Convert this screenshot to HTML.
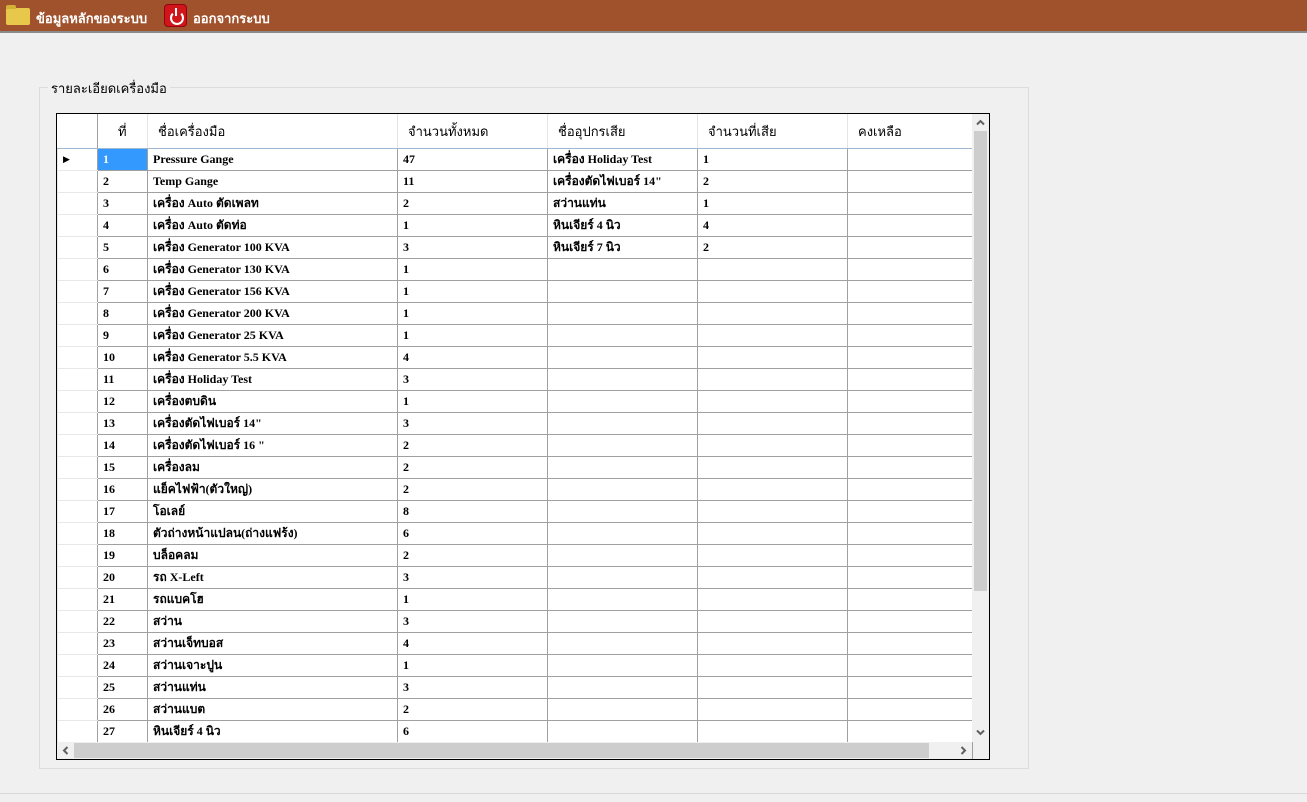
<!DOCTYPE html>
<html><head><meta charset="utf-8"><style>
*{margin:0;padding:0;box-sizing:border-box}
body{width:1307px;height:802px;background:#f0f0f0;position:relative;overflow:hidden;font-family:"Liberation Serif","DejaVu Sans",serif}
.top{position:absolute;left:0;top:0;width:1307px;height:33px;background:#a0522d;border-bottom:2px solid #8a8a8a}
.top span{position:absolute;top:8px;color:#fff;font:bold 13px "Liberation Sans","DejaVu Sans",sans-serif}
.fold{position:absolute;left:6px;top:8px;width:24px;height:17px;background:#e8c84a;border-radius:2px}
.fold:before{content:"";position:absolute;left:0;top:-3px;width:10px;height:4px;background:#d4b035;border-radius:2px 2px 0 0}
.pwr{position:absolute;left:164px;top:4px;width:23px;height:23px;background:#d0161b;border-radius:4px;border:1px solid #901}
.pwr:after{content:"";position:absolute;left:5px;top:6px;width:10px;height:10px;border:2px solid #fff;border-radius:50%;border-top-color:transparent}
.pwr:before{content:"";position:absolute;left:10px;top:3px;width:2px;height:8px;background:#fff;z-index:2}
.gb{position:absolute;left:39px;top:87px;width:990px;height:682px;border:1px solid #dcdcdc}
.gbt{position:absolute;left:48px;top:78px;background:#f0f0f0;padding:0 3px;font:13px "Liberation Sans","DejaVu Sans",sans-serif;color:#000}
.grid{position:absolute;left:56px;top:113px;width:934px;height:647px;border:1px solid #000;background:#f0f0f0;overflow:hidden}
table{position:absolute;left:0;top:0;border-collapse:collapse;table-layout:fixed;background:#fff}
td,th{height:22px;border:1px solid #a0a0a0;font-size:12px;font-weight:bold;padding:1px 0 0 5px;white-space:nowrap;overflow:hidden;text-align:left}
th{height:34px;background:#fff;font-weight:normal;font-size:13px;padding-left:10px;border:none;border-right:1px solid #e4e4e4;border-bottom:1px solid #a0b8d0}
td.rh{background:#fff;border-color:#e8e8e8;border-right:1px solid #a0a0a0}
.sel{background:#3399ff;color:#fff}
.vs{position:absolute;left:915px;top:0;width:17px;height:628px;background:#f0f0f0}
.vt{position:absolute;left:2px;top:17px;width:13px;height:460px;background:#cdcdcd}
.hs{position:absolute;left:0;top:628px;width:915px;height:17px;background:#f0f0f0}
.ht{position:absolute;left:17px;top:1px;width:855px;height:15px;background:#cdcdcd}
svg.ar{position:absolute;width:9px;height:9px}
.sb{position:absolute;left:0;top:793px;width:1307px;height:1px;background:#d8d8d8}
</style></head><body>
<div class="top"><div class="fold"></div><span style="left:36px">ข้อมูลหลักของระบบ</span><div class="pwr"></div><span style="left:193px">ออกจากระบบ</span></div>
<div class="gb"></div><div class="gbt">รายละเอียดเครื่องมือ</div>
<div class="grid">
<table style="width:915px">
<colgroup><col style="width:40px"><col style="width:50px"><col style="width:250px"><col style="width:150px"><col style="width:150px"><col style="width:150px"><col style="width:125px"></colgroup>
<tr><th style="border-right:1px solid #a0a0a0"></th><th style="padding-left:20px">ที่</th><th>ชื่อเครื่องมือ</th><th>จำนวนทั้งหมด</th><th>ชื่ออุปกรเสีย</th><th>จำนวนที่เสีย</th><th>คงเหลือ</th></tr>
<tr><td class="rh" style="font-size:9px">▶</td><td class="sel">1</td><td>Pressure Gange</td><td>47</td><td>เครื่อง Holiday Test</td><td>1</td><td></td></tr>
<tr><td class="rh"></td><td>2</td><td>Temp Gange</td><td>11</td><td>เครื่องตัดไฟเบอร์ 14"</td><td>2</td><td></td></tr>
<tr><td class="rh"></td><td>3</td><td>เครื่อง Auto ตัดเพลท</td><td>2</td><td>สว่านแท่น</td><td>1</td><td></td></tr>
<tr><td class="rh"></td><td>4</td><td>เครื่อง Auto ตัดท่อ</td><td>1</td><td>หินเจียร์ 4 นิว</td><td>4</td><td></td></tr>
<tr><td class="rh"></td><td>5</td><td>เครื่อง Generator 100 KVA</td><td>3</td><td>หินเจียร์ 7 นิว</td><td>2</td><td></td></tr>
<tr><td class="rh"></td><td>6</td><td>เครื่อง Generator 130 KVA</td><td>1</td><td></td><td></td><td></td></tr>
<tr><td class="rh"></td><td>7</td><td>เครื่อง Generator 156 KVA</td><td>1</td><td></td><td></td><td></td></tr>
<tr><td class="rh"></td><td>8</td><td>เครื่อง Generator 200 KVA</td><td>1</td><td></td><td></td><td></td></tr>
<tr><td class="rh"></td><td>9</td><td>เครื่อง Generator 25 KVA</td><td>1</td><td></td><td></td><td></td></tr>
<tr><td class="rh"></td><td>10</td><td>เครื่อง Generator 5.5 KVA</td><td>4</td><td></td><td></td><td></td></tr>
<tr><td class="rh"></td><td>11</td><td>เครื่อง Holiday Test</td><td>3</td><td></td><td></td><td></td></tr>
<tr><td class="rh"></td><td>12</td><td>เครื่องตบดิน</td><td>1</td><td></td><td></td><td></td></tr>
<tr><td class="rh"></td><td>13</td><td>เครื่องตัดไฟเบอร์ 14"</td><td>3</td><td></td><td></td><td></td></tr>
<tr><td class="rh"></td><td>14</td><td>เครื่องตัดไฟเบอร์ 16 "</td><td>2</td><td></td><td></td><td></td></tr>
<tr><td class="rh"></td><td>15</td><td>เครื่องลม</td><td>2</td><td></td><td></td><td></td></tr>
<tr><td class="rh"></td><td>16</td><td>แย็คไฟฟ้า(ตัวใหญ่)</td><td>2</td><td></td><td></td><td></td></tr>
<tr><td class="rh"></td><td>17</td><td>โอเลย์</td><td>8</td><td></td><td></td><td></td></tr>
<tr><td class="rh"></td><td>18</td><td>ตัวถ่างหน้าแปลน(ถ่างแฟร้ง)</td><td>6</td><td></td><td></td><td></td></tr>
<tr><td class="rh"></td><td>19</td><td>บล็อคลม</td><td>2</td><td></td><td></td><td></td></tr>
<tr><td class="rh"></td><td>20</td><td>รถ X-Left</td><td>3</td><td></td><td></td><td></td></tr>
<tr><td class="rh"></td><td>21</td><td>รถแบคโฮ</td><td>1</td><td></td><td></td><td></td></tr>
<tr><td class="rh"></td><td>22</td><td>สว่าน</td><td>3</td><td></td><td></td><td></td></tr>
<tr><td class="rh"></td><td>23</td><td>สว่านเจ็ทบอส</td><td>4</td><td></td><td></td><td></td></tr>
<tr><td class="rh"></td><td>24</td><td>สว่านเจาะปูน</td><td>1</td><td></td><td></td><td></td></tr>
<tr><td class="rh"></td><td>25</td><td>สว่านแท่น</td><td>3</td><td></td><td></td><td></td></tr>
<tr><td class="rh"></td><td>26</td><td>สว่านแบต</td><td>2</td><td></td><td></td><td></td></tr>
<tr><td class="rh"></td><td>27</td><td>หินเจียร์ 4 นิว</td><td>6</td><td></td><td></td><td></td></tr>
<tr><td class="rh"></td><td>28</td><td>หินเจียร์ 7 นิว</td><td>3</td><td></td><td></td><td></td></tr>
</table>
<div class="vs"><div class="vt"></div>
<svg class="ar" style="left:4px;top:4px" viewBox="0 0 9 9"><path d="M1 6.5L4.5 3L8 6.5" fill="none" stroke="#606060" stroke-width="2"/></svg>
<svg class="ar" style="left:4px;top:614px" viewBox="0 0 9 9"><path d="M1 2.5L4.5 6L8 2.5" fill="none" stroke="#606060" stroke-width="2"/></svg></div>
<div class="hs"><div class="ht"></div>
<svg class="ar" style="left:4px;top:4px" viewBox="0 0 9 9"><path d="M6.5 1L3 4.5L6.5 8" fill="none" stroke="#606060" stroke-width="2"/></svg>
<svg class="ar" style="left:902px;top:4px" viewBox="0 0 9 9"><path d="M2.5 1L6 4.5L2.5 8" fill="none" stroke="#606060" stroke-width="2"/></svg></div>
</div>
<div class="sb"></div>
</body></html>
